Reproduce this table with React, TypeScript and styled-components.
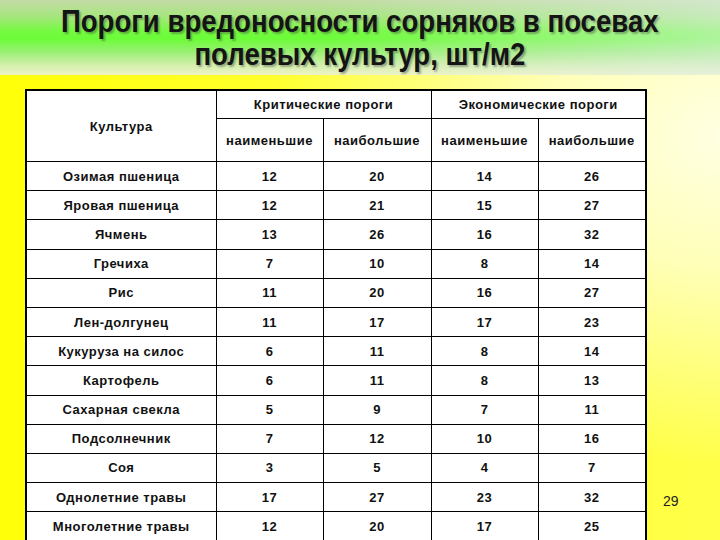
import React from "react";
import styled, { createGlobalStyle } from "styled-components";

const Global = createGlobalStyle`
  html, body { margin: 0; padding: 0; }
  body { width: 720px; height: 540px; overflow: hidden; font-family: "Liberation Sans", Arial, sans-serif; }
`;

const Page = styled.div`
  width: 720px;
  height: 540px;
  display: flex;
  flex-direction: column;
  overflow: hidden;
`;

const TitleBar = styled.header`
  height: 75px;
  flex: none;
  display: flex;
  flex-direction: column;
  align-items: center;
  justify-content: center;
  background:
    linear-gradient(90deg, rgba(235, 245, 240, 0) 45%, rgba(225, 238, 235, 0.55) 100%),
    linear-gradient(180deg, #c4dba6 0%, #a6e67e 22%, #74fa40 42%, #6cfc38 52%, #96f070 68%, #d6efb0 88%, #eef4c4 100%);
`;

const TitleLine = styled.h1`
  margin: 0;
  font-family: "Liberation Sans", Arial, sans-serif;
  font-weight: 700;
  font-size: 31px;
  line-height: 33px;
  color: #141414;
  white-space: nowrap;
  transform: scaleX(0.89);
  text-shadow: 2px 2px 2px rgba(60, 60, 60, 0.4);
`;

const Body = styled.main`
  flex: 1;
  display: flex;
  align-items: flex-start;
  padding: 14px 0 0 25px;
  background:
    radial-gradient(ellipse 460px 330px at 730px 60px, #ffffe4 0%, #ffffb8 40%, rgba(255, 255, 80, 0) 100%),
    linear-gradient(90deg, #ffff08 0%, #ffff30 40%, #ffff48 100%);
`;

const Table = styled.table`
  border-collapse: collapse;
  table-layout: fixed;
  width: 620px;
  background: #ffffff;
  border: 2px solid #000;
  font-family: "Liberation Sans", Arial, sans-serif;
  font-weight: 700;
  font-size: 13px;
  color: #111;
  flex: none;
`;

const HeadCell = styled.th<{ $h?: number }>`
  border: 1px solid #000;
  text-align: center;
  vertical-align: middle;
  font-weight: 700;
  letter-spacing: 0.5px;
  padding: 0;
  height: ${(p) => (p.$h ? `${p.$h}px` : "auto")};
`;

const Row = styled.tr`
  height: 29.2px;
`;

const Cell = styled.td`
  border: 1px solid #000;
  text-align: center;
  vertical-align: middle;
  padding: 0;
  letter-spacing: 0.5px;
`;

const PageNumber = styled.div`
  align-self: flex-end;
  margin: 0 0 33px 16px;
  font-family: "Liberation Sans", Arial, sans-serif;
  font-size: 14px;
  color: #222;
`;

const rows: [string, number, number, number, number][] = [
  ["Озимая пшеница", 12, 20, 14, 26],
  ["Яровая пшеница", 12, 21, 15, 27],
  ["Ячмень", 13, 26, 16, 32],
  ["Гречиха", 7, 10, 8, 14],
  ["Рис", 11, 20, 16, 27],
  ["Лен-долгунец", 11, 17, 17, 23],
  ["Кукуруза на силос", 6, 11, 8, 14],
  ["Картофель", 6, 11, 8, 13],
  ["Сахарная свекла", 5, 9, 7, 11],
  ["Подсолнечник", 7, 12, 10, 16],
  ["Соя", 3, 5, 4, 7],
  ["Однолетние травы", 17, 27, 23, 32],
  ["Многолетние травы", 12, 20, 17, 25],
];

export default function App() {
  return (
    <Page>
      <Global />
      <TitleBar>
        <TitleLine>Пороги вредоносности сорняков в посевах</TitleLine>
        <TitleLine>полевых культур, шт/м2</TitleLine>
      </TitleBar>
      <Body>
        <Table>
          <colgroup>
            <col style={{ width: 190 }} />
            <col style={{ width: 107 }} />
            <col style={{ width: 108 }} />
            <col style={{ width: 107 }} />
            <col style={{ width: 108 }} />
          </colgroup>
          <thead>
            <tr>
              <HeadCell rowSpan={2}>Культура</HeadCell>
              <HeadCell colSpan={2} $h={27}>Критические пороги</HeadCell>
              <HeadCell colSpan={2} $h={27}>Экономические пороги</HeadCell>
            </tr>
            <tr>
              <HeadCell $h={42}>наименьшие</HeadCell>
              <HeadCell $h={42}>наибольшие</HeadCell>
              <HeadCell $h={42}>наименьшие</HeadCell>
              <HeadCell $h={42}>наибольшие</HeadCell>
            </tr>
          </thead>
          <tbody>
            {rows.map(([name, a, b, c, d]) => (
              <Row key={name}>
                <Cell>{name}</Cell>
                <Cell>{a}</Cell>
                <Cell>{b}</Cell>
                <Cell>{c}</Cell>
                <Cell>{d}</Cell>
              </Row>
            ))}
          </tbody>
        </Table>
        <PageNumber>29</PageNumber>
      </Body>
    </Page>
  );
}
